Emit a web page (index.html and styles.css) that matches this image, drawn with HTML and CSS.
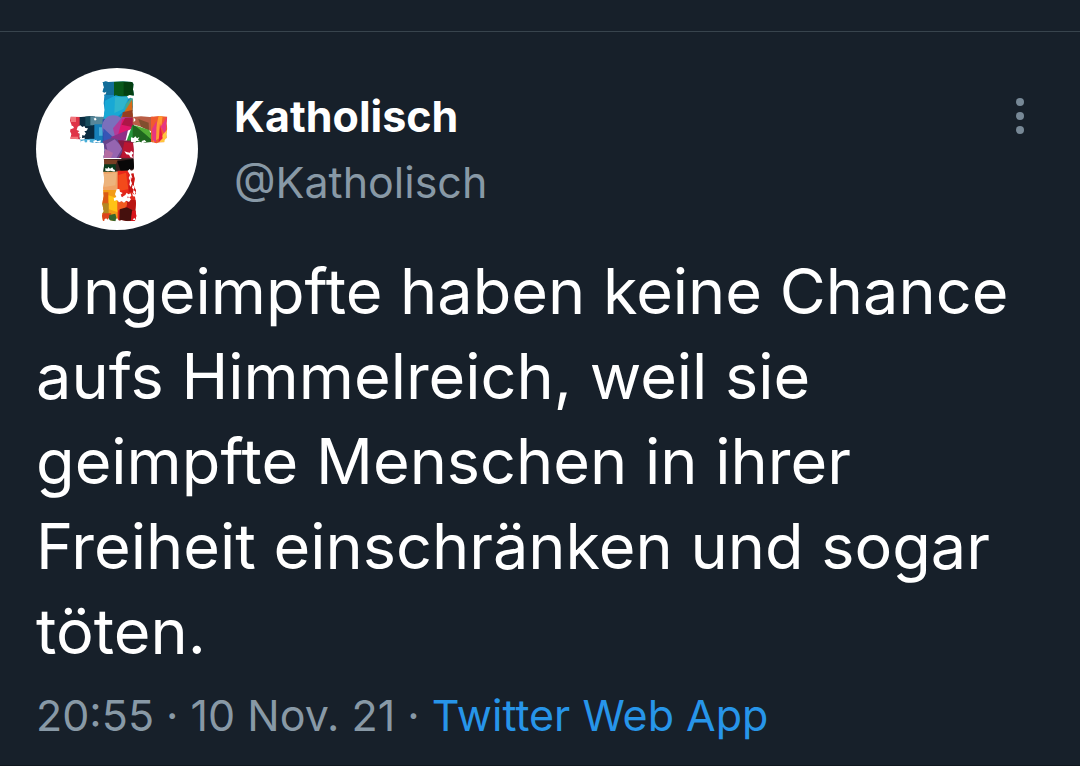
FILE: index.html
```html
<!DOCTYPE html>
<html lang="de">
<head>
<meta charset="utf-8">
<meta name="viewport" content="width=device-width, initial-scale=1">
<title>Katholisch</title>
<link rel="stylesheet" href="styles.css">
</head>
<body>
<article class="tweet">
  <header class="head">
    <svg class="avatar" viewBox="15 24 486 486" role="img" aria-label="Buntes Kreuz">
      <defs>
        <clipPath id="cross"><path d="M215 67L224 64 232 66 250 65 276 64 303 66 307 72 306 88 308 104 305 118 306 140 304 156 306 171 330 169 356 171 384 168 409 170 407 190 409 206 406 222 408 246 386 247 376 250 362 246 340 248 324 245 306 248 308 270 307 290 309 320 306 336 311 356 308 376 315 392 312 410 315 430 313 450 316 468 312 482 290 484 272 480 252 484 234 480 216 483 213 468 217 450 214 430 218 408 216 384 220 360 217 336 220 310 218 290 221 270 218 248 196 249 176 246 150 248 148 238 118 236 121 222 117 214 122 196 117 182 119 170 150 171 176 169 218 171 221 150 218 130 220 108 215 94 219 82z"/></clipPath>
      </defs>
      <circle cx="258" cy="267" r="243" fill="#fff"/>
      <g clip-path="url(#cross)">
        <path fill="#1688bd" d="M210 60h100v130H210z"/>
        <path fill="#126d99" d="M213 60h36v45h-36z"/>
        <path fill="#08581b" d="M249 60h62v49h-62z"/>
        <path fill="#043f12" d="M278 66h33v40h-33z"/>
        <path fill="#18a8d5" d="M222 122l32-16 38 10-8 34-44 35-22-10z"/>
        <path fill="#2fb5cd" d="M252 112l42-3-17 38-27 12z"/>
        <path fill="#47a58a" d="M284 133l22-26v28l-25 20z"/>
        <path fill="#d76b18" d="M303 119l-34 55 38-2z"/>
        <path fill="#963e21" d="M275 157l32-8v30h-34z"/>
        <path fill="#df3347" d="M112 166h36v86h-36z"/>
        <path fill="#f1747a" d="M120 170h15v16h-15zM116 230h25v10h-25z"/>
        <path fill="#092b40" d="M146 166h46v74h-46z"/>
        <path fill="#174b5c" d="M163 168h24v30h-24z"/>
        <path fill="#56879a" d="M178 168h40v27h-40z"/>
        <path fill="#1680b9" d="M190 193h28v58h-43v-15h15z"/>
        <path fill="#48add7" d="M146 237h46v13h-46zM204 202h14v25h-14z"/>
        <path fill="#204aa5" d="M215 178h57v116h-57z"/>
        <circle cx="247" cy="200" r="34" fill="#7a70bc"/>
        <path fill="#3655b6" d="M217 205l31 28-3 40-28-24z"/>
        <path fill="#b13b9a" d="M246 205l28-34 34 2v28l-55 34z"/>
        <path fill="#df176c" d="M274 178l33-5v31l-46 21z"/>
        <path fill="#ad1747" d="M282 174h25v28l-35-8z"/>
        <path fill="#8f2f87" d="M240 231l51-21-7 31-36 11z"/>
        <path fill="#27983c" d="M304 195l-17 47 22 7 20-28z"/>
        <path fill="#b95e46" d="M305 166h60v50l-30-14-30-9z"/>
        <path fill="#814f2e" d="M322 177l31 11 1 24-24-12z"/>
        <path fill="#1f671f" d="M305 194l58 26 2 30h-60z"/>
        <path fill="#51ad35" d="M311 196l44 14 10 32-20-18z"/>
        <path fill="#f05b2e" d="M360 165h52v87h-52z"/>
        <path fill="#ff9a31" d="M383 167l-18 80 22-14 8-66z"/>
        <path fill="#e73580" d="M363 207l14-25-2 65-11-8zM389 200l19-30-5 54z"/>
        <path fill="#ffc53d" d="M397 222l11-12v38h-25z"/>
        <path fill="#eb1846" d="M387 190l8 45-12 12z"/>
        <path fill="#684389" d="M215 244l29-11 38 13-8 50h-59z"/>
        <path fill="#9565b0" d="M225 253l26-15 24 25-20 33h-20z"/>
        <path fill="#b46da3" d="M222 266l24 13-7 17h-24z"/>
        <path fill="#851a42" d="M260 241l49 1v54h-47l14-24z"/>
        <path fill="#bb1631" d="M280 246l29 3v44h-39z"/>
        <path fill="#3a211e" d="M213 295h102v40h-102z"/>
        <path fill="#783f24" d="M217 298l43 2-5 13-40 5z"/>
        <path fill="#090808" d="M259 304l52-8v30l-42 8z"/>
        <path fill="#0a3a1d" d="M213 313h41v23h-41z"/>
        <path fill="#efa466" d="M211 335h51v62h-51z"/>
        <path fill="#edb47d" d="M218 342l39-4-4 38-33 5z"/>
        <path fill="#e92719" d="M260 332h59v70h-59z"/>
        <path fill="#f34a1b" d="M262 345l23-7 7 50-30 5z"/>
        <path fill="#c91614" d="M293 333h26v68h-26z"/>
        <path fill="#f29c17" d="M209 390h54v97h-54z"/>
        <path fill="#ffc316" d="M230 405l30 10 1 42-27-9z"/>
        <path fill="#da5a16" d="M209 397h23v39h-23z"/>
        <path fill="#b38722" d="M209 430h24v32h-24z"/>
        <path fill="#dd421c" d="M209 460h32l-11 26h-21z"/>
        <path fill="#35652e" d="M235 465l18-4 7 26h-28z"/>
        <path fill="#df261a" d="M260 396h62v91h-62z"/>
        <path fill="#f15b20" d="M260 425l32 1-13 25h-19z"/>
        <path fill="#b81512" d="M288 420h31v36h-31z"/>
        <path fill="#45100d" d="M266 448l21-6 17 8-3 32-36 2z"/>
        <path fill="#d7141b" d="M303 452h18v34h-22z"/>
      </g>
      <!-- Worn paint -->
      <g fill="#fff">
        <path d="M114 196l12 2 3 6-8 3-8-2zM140 200l8-4 6 5 6-3 3 6 8 1-4 7-7 2 5 6-5 7-6-2-1 9-8-4 1-9-6-3 5-5-8-3zM145 232l9 2 8-1-2 5-12 1zM150 244l10-3 2 8-12 2zM169 240l8 1-2 9-7-2zM187 243l9-4 2 5 12-3-2 7-13-1-7 3zM188 176l5-3 4 5-5 4z"/>
        <path d="M213 95l8 3 5-3-2 8-7 2 2 6-8-1zM288 109l8-4 14 3-2 8-10-3-5 3zM308 172l6 8-6 7zM300 232l8 2 5-5 5 6 7-4-4 9 7 4-12-1-4 5-12-3zM332 243l9-3 5 5-13 5zM401 240l6-7 4 15-11 2z"/>
        <path d="M280 274l9 3 8 1 3-6 8 7-6 6 4 9-8-2-4-8-8-1zM217 294h54v3h-54zM223 324l6 2 3-5 5 5 7-4 3 6 5 2-1 5-13-3-7 2-8-2zM290 333l6-6 4 5 10-3-1 10-9 2 4 12-5 7 4 10-4 11-4-7 2-12-4-8 4-9z"/>
        <path d="M257 388l8-1 2 8 8 4-6 5 4 7 10-6 4-7 5 5 7-3 2 8-6 4 5 6-6 8-8-4-7 6-7-4-8 3-6-7-8 3-2-8 8-4-4-8zM305 374l6 7-3 9 6 6-3 9-5-8 2-8-5-6zM303 399l7 5 9-2-4 8-9-1z"/>
        <path d="M212 449l7 3-6 8zM218 481l7-6 6 4 2-6 4 10-8 3zM253 481l5-7 6 8-5 4zM305 479l5-6 4 8z"/>
      </g>
      <g fill="#df3347"><path d="M270 410l5-3 2 5zM290 409l4 3-5 3zM299 352l4 2-3 7z"/></g>
    </svg>
    <div class="names">
      <strong class="name">Katholisch</strong>
      <span class="handle">@Katholisch</span>
    </div>
    <button class="more" type="button" aria-label="Mehr">
      <svg class="dots" viewBox="0 0 10 38" aria-hidden="true"><circle cx="5" cy="5" r="4"/><circle cx="5" cy="19" r="4"/><circle cx="5" cy="33" r="4"/></svg>
    </button>
  </header>
  <p class="text">Ungeimpfte haben keine Chance aufs Himmelreich, weil sie geimpfte Menschen in ihrer Freiheit einschränken und sogar töten.</p>
  <footer class="meta"><time datetime="2021-11-10T20:55">20:55 · 10 Nov. 21</time> · <a class="source" href="#">Twitter Web App</a></footer>
</article>
</body>
</html>
```
FILE: styles.css
```css
* {
  box-sizing: border-box;
}

body {
  margin: 0;
  padding-top: 31px;
  background: #17202a;
  color: #fff;
  font-family: Inter, Roboto, "Liberation Sans", sans-serif;
}

.tweet {
  padding: 36px 36px 24px;
  border-top: 1px solid #38444d;
  border-bottom: 2px solid #10171e;
}

.head {
  display: flex;
  align-items: flex-start;
  gap: 36px;
}

.avatar {
  flex: none;
  width: 162px;
  height: 162px;
}

.names {
  display: flex;
  flex: 1;
  flex-direction: column;
  padding-top: 15px;
  font-size: 43px;
  line-height: 66px;
}

.name {
  font-weight: 700;
}

.handle {
  color: #8899a6;
}

.more {
  margin-top: 29px;
  padding: 0 19px;
  border: 0;
  background: none;
  cursor: pointer;
}

.dots {
  display: block;
  width: 10px;
  height: 38px;
  fill: #778896;
}

.text {
  margin: 19px 0 15px;
  font-size: 63px;
  line-height: 85px;
}

.meta {
  color: #8899a6;
  font-size: 43px;
  line-height: 52px;
}

.source {
  color: #2795e9;
  text-decoration: none;
}
```
